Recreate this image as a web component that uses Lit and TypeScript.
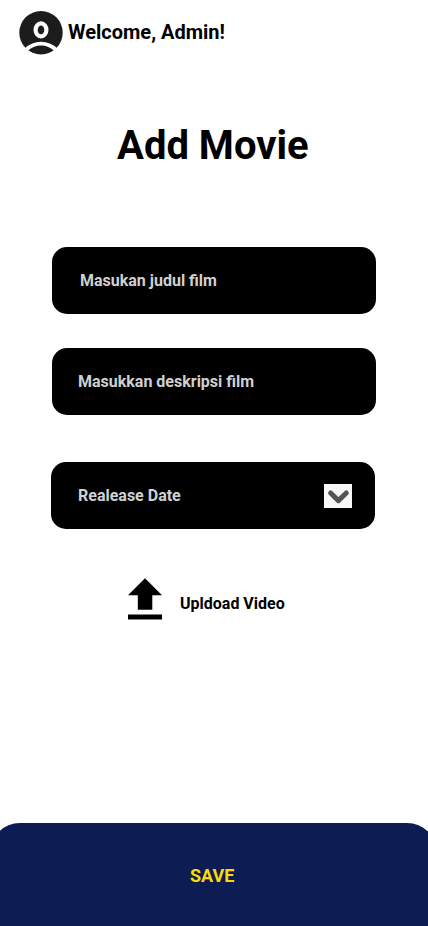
import { LitElement, html, css } from "lit";
import { customElement } from "lit/decorators.js";

@customElement("app-root")
export class AppRoot extends LitElement {
  static styles = css`
    :host {
      display: flex;
      flex-direction: column;
      width: 428px;
      height: 926px;
      overflow: hidden;
      background: #fff;
      color: #000;
      font-family: Roboto, sans-serif;
      font-weight: 700;
    }
    * { box-sizing: border-box; }
    svg { display: block; flex: none; }
    header {
      display: flex;
      align-items: center;
      gap: 5px;
      height: 65px;
      padding-left: 19px;
      font-size: 20px;
      line-height: 24px;
    }
    .hello { margin-top: -1px; }
    h1 {
      margin: 57px 0 0 117px;
      font-size: 40px;
      line-height: 47px;
      font-weight: 700;
    }
    form {
      display: flex;
      flex-direction: column;
      margin: 78px 0 0 52px;
    }
    .field {
      display: flex;
      align-items: center;
      justify-content: space-between;
      width: 324px;
      height: 67px;
      padding: 0 23px 0 26px;
      border-radius: 15px;
      background: #000;
      color: #d0d0d0;
      font-size: 16px;
      line-height: 19px;
    }
    .title { padding-left: 28px; }
    .description { margin-top: 34px; }
    .date { margin: 47px 0 0 -1px; padding-left: 27px; }
    .upload {
      display: flex;
      align-items: center;
      gap: 18px;
      margin: 49px 0 0 128px;
      font-size: 16px;
      line-height: 19px;
    }
    .upload span { margin-top: 9px; }
    .save {
      flex: none;
      height: 103px;
      width: 447px;
      margin: auto 0 0 -10px;
      padding: 2px 0 0 200px;
      border: 0;
      border-radius: 30px 30px 0 0;
      background: #0d1c52;
      color: #fad90a;
      font: 700 18px/21px Roboto, sans-serif;
      text-align: left;
    }
  `;

  render() {
    return html`
      <header>
        <svg width="44" height="44" viewBox="0 0 44 44">
          <circle cx="22" cy="21.7" r="21.7" fill="#1c1b1d" />
          <ellipse cx="22" cy="18.9" rx="5.4" ry="6.5" fill="none" stroke="#fff" stroke-width="4.2" />
          <path d="M7 38.8Q13.5 32.6 22 32.6T37 38.8" fill="none" stroke="#fff" stroke-width="3.9" />
        </svg>
        <span class="hello">Welcome, Admin!</span>
      </header>
      <h1>Add Movie</h1>
      <form>
        <div class="field title">Masukan judul film</div>
        <div class="field description">Masukkan deskripsi film</div>
        <div class="field date">
          <span>Realease Date</span>
          <svg width="28" height="24" viewBox="0 0 28 24">
            <rect width="28" height="24" fill="#f8f8f8" />
            <path d="M6.6 9L14.4 16.6L22.3 9" fill="none" stroke="#555" stroke-width="5" stroke-linecap="round" stroke-linejoin="round" />
          </svg>
        </div>
      </form>
      <div class="upload">
        <svg width="34" height="42" viewBox="0 0 34 42">
          <path d="M17 .3L34 17.2H24.3V31.7H9.8V17.2H0ZM0 36.4H34V41.6H0Z" />
        </svg>
        <span>Upldoad Video</span>
      </div>
      <button class="save">SAVE</button>
    `;
  }
}
